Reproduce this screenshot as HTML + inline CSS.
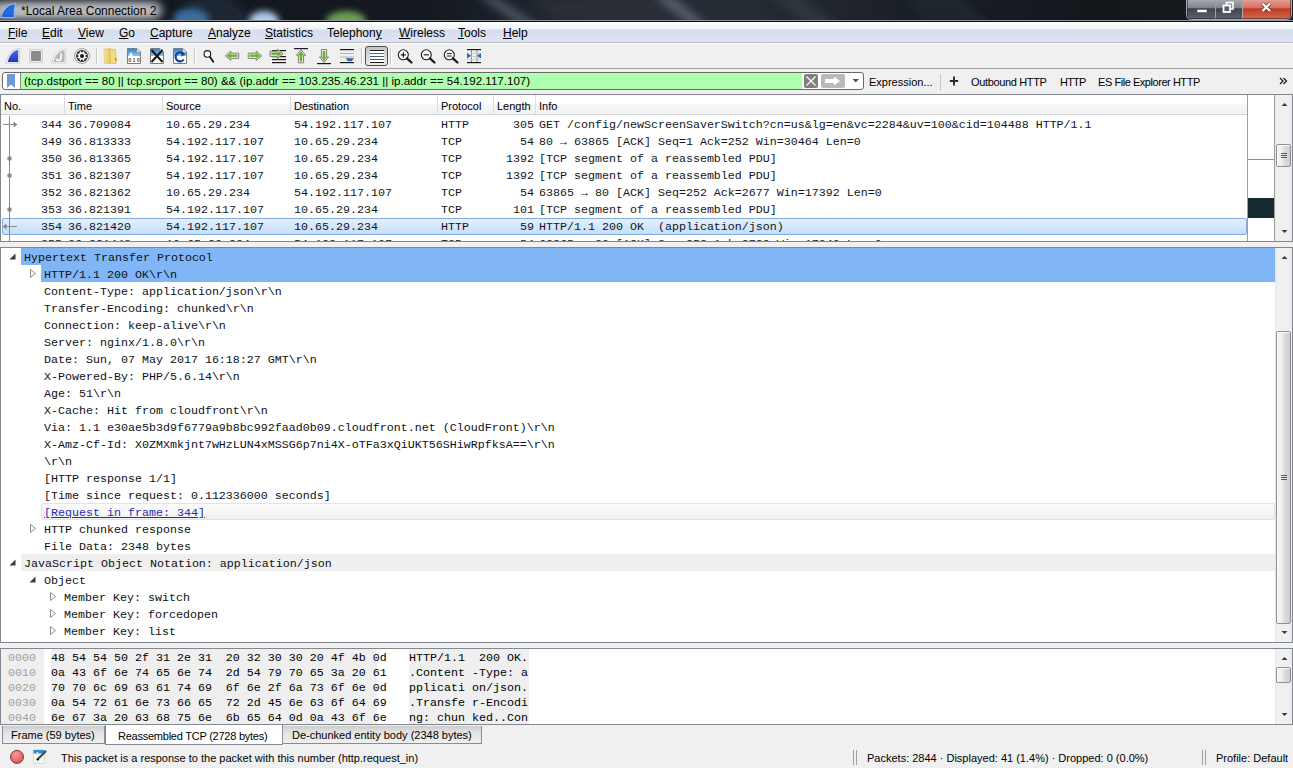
<!DOCTYPE html><html><head><meta charset="utf-8"><style>
*{margin:0;padding:0;box-sizing:border-box}
html,body{width:1293px;height:768px;overflow:hidden;background:#f0f0f0;font-family:"Liberation Sans",sans-serif;font-size:11px;color:#000}
.a{position:absolute;white-space:pre}
#menu span{position:absolute;top:4px;font-size:12px;line-height:14px}
#menu u{text-decoration:underline;text-underline-offset:1px}
.pane{position:absolute;background:#fff;border:1px solid #828790}
.pr{position:absolute;height:17px;line-height:17px;margin:1px 0 0 -1px;font-family:"Liberation Mono",monospace;font-size:11.6667px;letter-spacing:0px;white-space:pre;color:#12161b}
.dr{position:absolute;height:17px;line-height:17px;margin-top:2px;font-family:"Liberation Mono",monospace;font-size:11.6667px;letter-spacing:0px;white-space:pre;color:#0d1117}
.hx{position:absolute;height:15px;line-height:15px;margin-top:2px;font-family:"Liberation Mono",monospace;font-size:11.6667px;letter-spacing:0px;white-space:pre}
</style></head><body>
<svg class="a" style="left:0;top:0" width="1293" height="22" viewBox="0 0 1293 22"><defs><filter id="b4" x="-50%" y="-50%" width="200%" height="200%"><feGaussianBlur stdDeviation="4"/></filter><filter id="b8" x="-50%" y="-50%" width="200%" height="200%"><feGaussianBlur stdDeviation="8"/></filter><filter id="b3" x="-50%" y="-50%" width="200%" height="200%"><feGaussianBlur stdDeviation="3"/></filter><linearGradient id="tbg" x1="0" y1="0" x2="1" y2="0"><stop offset="0" stop-color="#12171d"/><stop offset="0.33" stop-color="#141920"/><stop offset="0.45" stop-color="#232a33"/><stop offset="0.58" stop-color="#262c34"/><stop offset="0.7" stop-color="#1b2027"/><stop offset="0.85" stop-color="#13171c"/><stop offset="1" stop-color="#1a1e23"/></linearGradient><linearGradient id="btng" x1="0" y1="0" x2="0" y2="1"><stop offset="0" stop-color="#a9aeb4"/><stop offset="0.45" stop-color="#7d838b"/><stop offset="0.5" stop-color="#3f454e"/><stop offset="1" stop-color="#5b6169"/></linearGradient><linearGradient id="btnr" x1="0" y1="0" x2="0" y2="1"><stop offset="0" stop-color="#e6a49b"/><stop offset="0.45" stop-color="#d66f60"/><stop offset="0.5" stop-color="#c23a22"/><stop offset="1" stop-color="#d0654f"/></linearGradient></defs><rect x="0" y="0" width="1293" height="20" fill="url(#tbg)"/><g filter="url(#b4)"><path d="M478 -4 L494 -4 L540 26 L522 26 Z" fill="#4a5563"/><path d="M655 -4 L672 -4 L708 26 L690 26 Z" fill="#56616e"/><path d="M530 0 L660 0 L690 22 L560 22 Z" fill="#2a313a" opacity="0.8"/><path d="M180 -4 L230 -4 L260 26 L210 26 Z" fill="#1e2630"/><path d="M770 -4 L800 -4 L840 26 L810 26 Z" fill="#2e353e"/><path d="M900 -4 L960 -4 L990 26 L930 26 Z" fill="#1f252c"/></g><g filter="url(#b3)"><ellipse cx="191" cy="20" rx="18" ry="12" fill="#3a6c9c"/><ellipse cx="264" cy="21" rx="15" ry="10" fill="#aecbea"/><ellipse cx="346" cy="21" rx="20" ry="10" fill="#6c9e52"/></g><g filter="url(#b4)"><rect x="-10" y="2" width="172" height="17" rx="8" fill="#b2b6bc"/></g><rect x="4" y="5" width="146" height="11" fill="#c6c9ce" opacity="0.5" filter="url(#b4)"/><path d="M0.3 18 L15 18 C14.2 13 14.6 8 16 3 C8.5 3.5 2.5 9 0.3 18 Z" fill="#8fbaf0"/><path d="M1.6 17 L13.9 17 C13.3 12.5 13.6 8.5 14.7 4.3 C8.5 5 3.5 10 1.6 17 Z" fill="#1f5fd9"/><path d="M4 15 L12.5 15 C12.2 11.5 12.4 9 13 6 C8.5 7 5.5 10.5 4 15 Z" fill="#2a70e6" opacity="0.7"/><path d="M1186.5 -1 V14.5 Q1186.5 19.5 1191.5 19.5 H1286.5 Q1291.5 19.5 1291.5 14.5 V-1" fill="none" stroke="#c9ccd0" stroke-width="1" opacity="0.8"/><path d="M1187.5 -1 V14 Q1187.5 18.5 1192 18.5 H1215 V-1 Z" fill="url(#btng)"/><rect x="1216" y="-1" width="26" height="19.5" fill="url(#btng)"/><path d="M1243 -1 V18.5 H1286 Q1290.5 18.5 1290.5 14 V-1 Z" fill="url(#btnr)"/><rect x="1215" y="0" width="1" height="18.5" fill="#d7d9dc" opacity="0.7"/><rect x="1242" y="0" width="1" height="18.5" fill="#e0c8c4" opacity="0.8"/><rect x="1197" y="9.5" width="10" height="3" fill="#fff" stroke="#555" stroke-width="0.6"/><rect x="1226.5" y="2.5" width="6.5" height="6.5" fill="none" stroke="#fff" stroke-width="1.6"/><rect x="1223.5" y="5.5" width="6.5" height="6.5" fill="#5a6068" stroke="#fff" stroke-width="1.8"/><path d="M1262.5 3.5 L1270 11 M1270 3.5 L1262.5 11" stroke="#5a2a22" stroke-width="3.6"/><path d="M1262.5 3.5 L1270 11 M1270 3.5 L1262.5 11" stroke="#fff" stroke-width="2.4"/></svg>
<div class="a" style="left:0;top:20px;width:1293px;height:1px;background:#8f959c"></div>
<div class="a" style="left:0;top:21px;width:1293px;height:1px;background:#0a0c0e"></div>
<div class="a" style="left:21px;top:4px;font-size:12px;line-height:14px">*Local Area Connection 2</div>
<div id="menu" class="a" style="left:0;top:22px;width:1293px;height:20px;background:linear-gradient(#ffffff 0,#f0f2f8 7px,#d7ddec 8px,#dfe4f3 100%)">
<span style="left:8px"><u>F</u>ile</span>
<span style="left:42px"><u>E</u>dit</span>
<span style="left:78px"><u>V</u>iew</span>
<span style="left:119px"><u>G</u>o</span>
<span style="left:150px"><u>C</u>apture</span>
<span style="left:208px"><u>A</u>nalyze</span>
<span style="left:265px"><u>S</u>tatistics</span>
<span style="left:327px">Telephon<u>y</u></span>
<span style="left:399px"><u>W</u>ireless</span>
<span style="left:458px"><u>T</u>ools</span>
<span style="left:503px"><u>H</u>elp</span>
</div>
<div class="a" style="left:0;top:42px;width:1293px;height:1px;background:#b8bcc6"></div>
<div class="a" style="left:0;top:43px;width:1293px;height:1px;background:#ffffff"></div>
<svg class="a" style="left:0;top:44px" width="500" height="24" viewBox="0 44 500 24"><defs><linearGradient id="gfin" x1="0" y1="0" x2="0" y2="1"><stop offset="0" stop-color="#4a6ee8"/><stop offset="1" stop-color="#1f34b8"/></linearGradient><linearGradient id="gdoc" x1="0" y1="0" x2="0" y2="1"><stop offset="0" stop-color="#2f86d6"/><stop offset="1" stop-color="#8cc4ee"/></linearGradient><linearGradient id="gfold" x1="0" y1="0" x2="1" y2="0"><stop offset="0" stop-color="#f7e79a"/><stop offset="1" stop-color="#e2c45a"/></linearGradient><linearGradient id="gbtn" x1="0" y1="0" x2="0" y2="1"><stop offset="0" stop-color="#c4c4c4"/><stop offset="1" stop-color="#ececec"/></linearGradient></defs><path d="M5.5 63.5 L19.8 63.5 L19.8 48 C13 48.5 7.5 53 5.5 63.5 Z" fill="#c4c8d0"/><path d="M6.6 62.6 L18.9 62.6 L18.9 49 C13 49.5 8.5 54 6.6 62.6 Z" fill="#fff"/><path d="M7.8 62 L18.2 62 L18.2 50 C13.5 50.5 9.5 54.5 7.8 62 Z" fill="url(#gfin)"/><rect x="29.5" y="49.5" width="13" height="13" fill="#f4f4f4" stroke="#cfcfcf"/><rect x="31" y="51" width="10" height="10" fill="#8a8a8a"/><path d="M51 63.5 L66.3 63.5 L66.3 48 C59 48.5 53 53 51 63.5 Z" fill="#d4d4d4"/><path d="M52.2 62.6 L65.4 62.6 L65.4 49 C59 49.5 54 54 52.2 62.6 Z" fill="#fff"/><path d="M53.4 62 L64.7 62 L64.7 50 C59.5 50.5 55 54.5 53.4 62 Z" fill="#b8b8b8"/><path d="M61 53.5 L61 58 Q61 60.5 58.5 60.5 Q56.5 60.5 56.3 58.5" fill="none" stroke="#fff" stroke-width="1.6"/><circle cx="82" cy="56" r="7.4" fill="#fff" stroke="#8c8c8c" stroke-width="0.9"/><circle cx="82" cy="56" r="5.9" fill="#1e1e1e"/><circle cx="82" cy="56" r="3.4" fill="#fff"/><circle cx="85.60" cy="57.49" r="1.05" fill="#fff"/><circle cx="83.49" cy="59.60" r="1.05" fill="#fff"/><circle cx="80.51" cy="59.60" r="1.05" fill="#fff"/><circle cx="78.40" cy="57.49" r="1.05" fill="#fff"/><circle cx="78.40" cy="54.51" r="1.05" fill="#fff"/><circle cx="80.51" cy="52.40" r="1.05" fill="#fff"/><circle cx="83.49" cy="52.40" r="1.05" fill="#fff"/><circle cx="85.60" cy="54.51" r="1.05" fill="#fff"/><rect x="80.2" y="54.2" width="3.6" height="3.6" rx="0.8" fill="#111"/><rect x="96" y="48" width="1" height="16" fill="#c8c8c8"/><rect x="97" y="48" width="1" height="16" fill="#fff"/><path d="M104 49 L110 48.5 L110.5 63.5 L104.5 63.5 Z" fill="url(#gfold)" stroke="#d9bf5a" stroke-width="0.6"/><path d="M110 49 L115.5 49.5 L116 59 L117 60 L116 63.5 L110.5 63.5 Z" fill="#f2dc7c" stroke="#d3b44a" stroke-width="0.6"/><rect x="115" y="58" width="1.2" height="2.5" fill="#8f7a3a"/><path d="M127.5 48.5 L137 48.5 L140.5 52 L140.5 63.5 L127.5 63.5 Z" fill="#fff" stroke="#7d7d7d" stroke-width="1"/><path d="M128 49 L136.8 49 L140 52.2 L140 56 L128 56 Z" fill="url(#gdoc)"/><path d="M137 49 L137 52 L140 52" fill="#e8f2fb" stroke="#9ab" stroke-width="0.5"/><path d="M150.5 48.5 L160 48.5 L163.5 52 L163.5 63.5 L150.5 63.5 Z" fill="#fff" stroke="#7d7d7d" stroke-width="1"/><path d="M151 49 L159.8 49 L163 52.2 L163 56 L151 56 Z" fill="url(#gdoc)"/><path d="M160 49 L160 52 L163 52" fill="#e8f2fb" stroke="#9ab" stroke-width="0.5"/><path d="M173.5 48.5 L183 48.5 L186.5 52 L186.5 63.5 L173.5 63.5 Z" fill="#fff" stroke="#7d7d7d" stroke-width="1"/><path d="M174 49 L182.8 49 L186 52.2 L186 56 L174 56 Z" fill="url(#gdoc)"/><path d="M183 49 L183 52 L186 52" fill="#e8f2fb" stroke="#9ab" stroke-width="0.5"/><path d="M129 56 L131 52 L133 56 Z" fill="#fff"/><text x="128.2" y="62" font-family="Liberation Sans" font-size="5.5" font-weight="bold" fill="#555" textLength="11.5">010</text><path d="M151.5 50 L162.5 62 M162.5 50 L151.5 62" stroke="#151515" stroke-width="2"/><path d="M183.5 54 A4.5 4.5 0 1 0 183.8 59.5" fill="none" stroke="#1b3f9e" stroke-width="2.2"/><path d="M181 51.5 L185.5 54.5 L181.5 56.5 Z" fill="#1b3f9e"/><rect x="194" y="48" width="1" height="16" fill="#c8c8c8"/><rect x="195" y="48" width="1" height="16" fill="#fff"/><circle cx="207.4" cy="53.9" r="3.3" fill="#fff" stroke="#1a1a1a" stroke-width="1.1"/><path d="M209.9 56.7 L213.3 61.8" stroke="#1a1a1a" stroke-width="1.9" stroke-linecap="round"/><path d="M225.25 55.80 L230.75 51.20 L230.75 53.20 L238.75 53.20 L238.75 58.40 L230.75 58.40 L230.75 60.40 Z" fill="#fbfdf8" stroke="#7b7f7a" stroke-width="1" stroke-linejoin="round"/><path d="M226.85 55.80 L230.45 53.20 L230.45 54.80 L237.15 54.80 L237.15 56.80 L230.45 56.80 L230.45 58.40 Z" fill="#6cb02e" stroke="#6cb02e" stroke-width="0.6" stroke-linejoin="round"/><path d="M261.75 55.80 L256.25 51.20 L256.25 53.20 L248.25 53.20 L248.25 58.40 L256.25 58.40 L256.25 60.40 Z" fill="#fbfdf8" stroke="#7b7f7a" stroke-width="1" stroke-linejoin="round"/><path d="M260.15 55.80 L256.55 53.20 L256.55 54.80 L249.85 54.80 L249.85 56.80 L256.55 56.80 L256.55 58.40 Z" fill="#6cb02e" stroke="#6cb02e" stroke-width="0.6" stroke-linejoin="round"/><rect x="272" y="50" width="14" height="1.2" fill="#1a1a1a"/><rect x="282" y="53" width="4" height="1.6" fill="#f1e67a"/><rect x="272" y="56" width="14" height="1.2" fill="#1a1a1a"/><rect x="272" y="59" width="14" height="1.2" fill="#1a1a1a"/><rect x="272" y="62" width="14" height="1.2" fill="#1a1a1a"/><path d="M283.00 53.80 L277.50 49.20 L277.50 51.20 L270.00 51.20 L270.00 56.40 L277.50 56.40 L277.50 58.40 Z" fill="#fbfdf8" stroke="#7b7f7a" stroke-width="1" stroke-linejoin="round"/><path d="M281.40 53.80 L277.80 51.20 L277.80 52.80 L271.60 52.80 L271.60 54.80 L277.80 54.80 L277.80 56.40 Z" fill="#6cb02e" stroke="#6cb02e" stroke-width="0.6" stroke-linejoin="round"/><rect x="294" y="48" width="14" height="1.2" fill="#1a1a1a"/><path d="M301.00 49.80 L296.40 55.30 L298.40 55.30 L298.40 62.80 L303.60 62.80 L303.60 55.30 L305.60 55.30 Z" fill="#fbfdf8" stroke="#7b7f7a" stroke-width="1" stroke-linejoin="round"/><path d="M301.00 51.40 L298.40 55.00 L300.00 55.00 L300.00 61.20 L302.00 61.20 L302.00 55.00 L303.60 55.00 Z" fill="#6cb02e" stroke="#6cb02e" stroke-width="0.6" stroke-linejoin="round"/><rect x="317" y="63" width="14" height="1.2" fill="#1a1a1a"/><path d="M324.00 62.50 L319.40 57.00 L321.40 57.00 L321.40 49.50 L326.60 49.50 L326.60 57.00 L328.60 57.00 Z" fill="#fbfdf8" stroke="#7b7f7a" stroke-width="1" stroke-linejoin="round"/><path d="M324.00 60.90 L321.40 57.30 L323.00 57.30 L323.00 51.10 L325.00 51.10 L325.00 57.30 L326.60 57.30 Z" fill="#6cb02e" stroke="#6cb02e" stroke-width="0.6" stroke-linejoin="round"/><rect x="340" y="49" width="14" height="1.2" fill="#1a1a1a"/><rect x="340" y="53" width="14" height="1" fill="#b0b0b0"/><rect x="340" y="56.5" width="14" height="1" fill="#b0b0b0"/><rect x="340" y="62" width="14" height="1.2" fill="#1a1a1a"/><path d="M345.5 58.3 L354 58.3 L351.5 61.3 L348 61.3 Z" fill="#2f62b0"/><rect x="361" y="48" width="1" height="16" fill="#c8c8c8"/><rect x="362" y="48" width="1" height="16" fill="#fff"/><rect x="365.5" y="46.5" width="22" height="19" rx="2.5" fill="url(#gbtn)" stroke="#4e4e4e"/><rect x="370" y="51" width="14" height="11" fill="#fff"/><rect x="370" y="50" width="14" height="1" fill="#1a1a1a"/><rect x="370" y="53" width="14" height="1" fill="#a84444"/><rect x="370" y="56" width="14" height="1" fill="#3f5a84"/><rect x="370" y="59" width="14" height="1" fill="#5e4466"/><rect x="370" y="62" width="14" height="1" fill="#1a1a1a"/><rect x="390" y="48" width="1" height="16" fill="#c8c8c8"/><rect x="391" y="48" width="1" height="16" fill="#fff"/><circle cx="403.3" cy="54.8" r="5" fill="#fff" stroke="#1a1a1a" stroke-width="1.1"/><path d="M406.90000000000003 58.4 L411.5 62.5" stroke="#1a1a1a" stroke-width="2.3" stroke-linecap="round"/><path d="M400.7 54.8 H405.90000000000003 M403.3 52.199999999999996 V57.4" stroke="#1a1a1a" stroke-width="1.2"/><circle cx="426.3" cy="54.8" r="5" fill="#fff" stroke="#1a1a1a" stroke-width="1.1"/><path d="M429.90000000000003 58.4 L434.5 62.5" stroke="#1a1a1a" stroke-width="2.3" stroke-linecap="round"/><path d="M423.7 54.8 H428.90000000000003" stroke="#1a1a1a" stroke-width="1.2"/><circle cx="449.3" cy="54.8" r="5" fill="#fff" stroke="#1a1a1a" stroke-width="1.1"/><path d="M452.90000000000003 58.4 L457.5 62.5" stroke="#1a1a1a" stroke-width="2.3" stroke-linecap="round"/><path d="M446.8 53.599999999999994 H451.8 M446.8 56.0 H451.8" stroke="#1a1a1a" stroke-width="1"/><rect x="467" y="49" width="14" height="1.2" fill="#1a1a1a"/><rect x="467" y="62" width="14" height="1.2" fill="#1a1a1a"/><rect x="471" y="50" width="1" height="12" fill="#8a8a8a"/><rect x="476.5" y="50" width="1" height="12" fill="#8a8a8a"/><rect x="467" y="53" width="14" height="0.8" fill="#c8c8c8"/><rect x="467" y="56" width="14" height="0.8" fill="#c8c8c8"/><rect x="467" y="59" width="14" height="0.8" fill="#c8c8c8"/><path d="M467 53 L471 55.7 L467 58.5 Z" fill="#2f6ab8"/><path d="M481 53 L477 55.7 L481 58.5 Z" fill="#2f6ab8"/></svg>
<div class="a" style="left:0;top:68px;width:1293px;height:1px;background:#a0a0a0"></div>
<div class="a" style="left:2px;top:72px;width:862px;height:18px;border:1px solid #6a6a6a;border-radius:3px;background:#fff;overflow:hidden"><div class="a" style="left:17px;top:0;width:782px;height:16px;background:#afffaf;border-left:1px solid #8a8a8a"></div></div>
<svg class="a" style="left:0;top:69px" width="870" height="24" viewBox="0 69 870 24"><path d="M7 74 H15 V88 L11 84.5 L7 88 Z" fill="#6c9bd5"/><rect x="804" y="74" width="14" height="14" rx="2" fill="#808080"/><path d="M806.5 76.5 L815.5 85.5 M815.5 76.5 L806.5 85.5" stroke="#fff" stroke-width="1.1"/><rect x="821" y="74" width="24" height="14" rx="2" fill="#b9b9b9"/><path d="M825 79 H834 V76.5 L840 81 L834 85.5 V83 H825 Z" fill="#fff"/><path d="M852.5 79 H859 L855.75 82.5 Z" fill="#555"/></svg>
<div class="a" style="left:24px;top:74px;font-size:11.57px;line-height:15px">(tcp.dstport == 80 || tcp.srcport == 80) &amp;&amp; (ip.addr == 103.235.46.231 || ip.addr == 54.192.117.107)</div>
<div class="a" style="left:869px;top:75px;line-height:14px">Expression...</div>
<div class="a" style="left:940px;top:74px;width:1px;height:17px;background:#c8c8c8"></div>
<svg class="a" style="left:948px;top:75px" width="12" height="12" viewBox="0 0 12 12"><path d="M6 1.5 V10.5 M1.8 6 H10.2" stroke="#2a2a2a" stroke-width="1.9"/></svg>
<div class="a" style="left:971px;top:75px;line-height:14px;letter-spacing:-0.35px">Outbound HTTP</div>
<div class="a" style="left:1060px;top:75px;line-height:14px;letter-spacing:-0.8px">HTTP</div>
<div class="a" style="left:1098px;top:75px;line-height:14px;letter-spacing:-0.45px">ES File Explorer HTTP</div>
<svg class="a" style="left:1279px;top:77px" width="9" height="8" viewBox="0 0 9 8"><path d="M1 1 L4 4 L1 7 M4.5 1 L7.5 4 L4.5 7" fill="none" stroke="#222" stroke-width="1.3"/></svg>
<div class="pane" style="left:0;top:94px;width:1293px;height:148px"></div>
<div class="a" style="left:1px;top:95px;width:1246px;height:20px;background:linear-gradient(#ffffff 0,#ffffff 9px,#f3f4f6 10px,#f1f2f4 100%)"></div>
<div class="a" style="left:1px;top:114px;width:1246px;height:1px;background:#d5d5d5"></div>
<div class="a" style="left:4px;top:100px;line-height:13px">No.</div>
<div class="a" style="left:68px;top:100px;line-height:13px">Time</div>
<div class="a" style="left:166px;top:100px;line-height:13px">Source</div>
<div class="a" style="left:294px;top:100px;line-height:13px">Destination</div>
<div class="a" style="left:441px;top:100px;line-height:13px">Protocol</div>
<div class="a" style="left:497px;top:100px;line-height:13px">Length</div>
<div class="a" style="left:539px;top:100px;line-height:13px">Info</div>
<div class="a" style="left:64px;top:95px;width:1px;height:19px;background:#dcdde0"></div>
<div class="a" style="left:162px;top:95px;width:1px;height:19px;background:#dcdde0"></div>
<div class="a" style="left:290px;top:95px;width:1px;height:19px;background:#dcdde0"></div>
<div class="a" style="left:437px;top:95px;width:1px;height:19px;background:#dcdde0"></div>
<div class="a" style="left:493px;top:95px;width:1px;height:19px;background:#dcdde0"></div>
<div class="a" style="left:535px;top:95px;width:1px;height:19px;background:#dcdde0"></div>
<div class="a" style="left:1247px;top:95px;width:1px;height:146px;background:#a0a0a0"></div>
<div class="a" style="left:1274px;top:95px;width:1px;height:146px;background:#a0a0a0"></div>
<div class="a" style="left:1248px;top:159px;width:26px;height:1px;background:#5b9ad6"></div>
<div class="a" style="left:1248px;top:198px;width:26px;height:20px;background:#172a30"></div>
<div class="a" style="left:1275px;top:95px;width:17px;height:146px;background:linear-gradient(90deg,#e6e6e6 0,#f0f0f0 2px,#f0f0f0 14px,#e9e9e9 17px)"></div><svg class="a" style="left:1275px;top:95px" width="17" height="146" viewBox="0 0 17 146"><path d="M6.5 11 L9.5 8 L12.5 11 Z" fill="#3a3a3a"/><path d="M6.5 135 L9.5 138 L12.5 135 Z" fill="#3a3a3a"/></svg><div class="a" style="left:1276px;top:144px;width:15px;height:23px;border:1px solid #8e8f8f;border-radius:2px;background:linear-gradient(90deg,#f7f7f7 0,#ececec 45%,#dcdcdc 55%,#cfcfcf 100%);box-shadow:inset 1px 1px 0 #fff"></div><div class="a" style="left:1281px;top:153px;width:6px;height:1px;background:#5a5a5a;box-shadow:0 2px 0 #5a5a5a,0 4px 0 #5a5a5a"></div>
<div class="a" style="left:1px;top:115px;width:1246px;height:126px;overflow:hidden">
<div class="a" style="left:1px;top:103px;width:1245px;height:17px;border:1px solid #84acdd;border-radius:2px;background:linear-gradient(#e4f0fd,#c4defc)"></div>
<div class="pr" style="left:41px;top:1px">344</div>
<div class="pr" style="left:68px;top:1px">36.709084</div>
<div class="pr" style="left:166px;top:1px">10.65.29.234</div>
<div class="pr" style="left:294px;top:1px">54.192.117.107</div>
<div class="pr" style="left:441px;top:1px">HTTP</div>
<div class="pr" style="left:513px;top:1px">305</div>
<div class="pr" style="left:539px;top:1px">GET /config/newScreenSaverSwitch?cn=us&amp;lg=en&amp;vc=2284&amp;uv=100&amp;cid=104488 HTTP/1.1</div>
<div class="pr" style="left:41px;top:18px">349</div>
<div class="pr" style="left:68px;top:18px">36.813333</div>
<div class="pr" style="left:166px;top:18px">54.192.117.107</div>
<div class="pr" style="left:294px;top:18px">10.65.29.234</div>
<div class="pr" style="left:441px;top:18px">TCP</div>
<div class="pr" style="left:520px;top:18px">54</div>
<div class="pr" style="left:539px;top:18px">80 → 63865 [ACK] Seq=1 Ack=252 Win=30464 Len=0</div>
<div class="pr" style="left:41px;top:35px">350</div>
<div class="pr" style="left:68px;top:35px">36.813365</div>
<div class="pr" style="left:166px;top:35px">54.192.117.107</div>
<div class="pr" style="left:294px;top:35px">10.65.29.234</div>
<div class="pr" style="left:441px;top:35px">TCP</div>
<div class="pr" style="left:506px;top:35px">1392</div>
<div class="pr" style="left:539px;top:35px">[TCP segment of a reassembled PDU]</div>
<div class="pr" style="left:41px;top:52px">351</div>
<div class="pr" style="left:68px;top:52px">36.821307</div>
<div class="pr" style="left:166px;top:52px">54.192.117.107</div>
<div class="pr" style="left:294px;top:52px">10.65.29.234</div>
<div class="pr" style="left:441px;top:52px">TCP</div>
<div class="pr" style="left:506px;top:52px">1392</div>
<div class="pr" style="left:539px;top:52px">[TCP segment of a reassembled PDU]</div>
<div class="pr" style="left:41px;top:69px">352</div>
<div class="pr" style="left:68px;top:69px">36.821362</div>
<div class="pr" style="left:166px;top:69px">10.65.29.234</div>
<div class="pr" style="left:294px;top:69px">54.192.117.107</div>
<div class="pr" style="left:441px;top:69px">TCP</div>
<div class="pr" style="left:520px;top:69px">54</div>
<div class="pr" style="left:539px;top:69px">63865 → 80 [ACK] Seq=252 Ack=2677 Win=17392 Len=0</div>
<div class="pr" style="left:41px;top:86px">353</div>
<div class="pr" style="left:68px;top:86px">36.821391</div>
<div class="pr" style="left:166px;top:86px">54.192.117.107</div>
<div class="pr" style="left:294px;top:86px">10.65.29.234</div>
<div class="pr" style="left:441px;top:86px">TCP</div>
<div class="pr" style="left:513px;top:86px">101</div>
<div class="pr" style="left:539px;top:86px">[TCP segment of a reassembled PDU]</div>
<div class="pr" style="left:41px;top:103px">354</div>
<div class="pr" style="left:68px;top:103px">36.821420</div>
<div class="pr" style="left:166px;top:103px">54.192.117.107</div>
<div class="pr" style="left:294px;top:103px">10.65.29.234</div>
<div class="pr" style="left:441px;top:103px">HTTP</div>
<div class="pr" style="left:520px;top:103px">59</div>
<div class="pr" style="left:539px;top:103px">HTTP/1.1 200 OK  (application/json)</div>
<div class="pr" style="left:41px;top:120px">355</div>
<div class="pr" style="left:68px;top:120px">36.821443</div>
<div class="pr" style="left:166px;top:120px">10.65.29.234</div>
<div class="pr" style="left:294px;top:120px">54.192.117.107</div>
<div class="pr" style="left:441px;top:120px">TCP</div>
<div class="pr" style="left:520px;top:120px">54</div>
<div class="pr" style="left:539px;top:120px">63865 → 80 [ACK] Seq=252 Ack=2729 Win=17340 Len=0</div>
<svg class="a" style="left:0;top:0" width="24" height="126" viewBox="1 115 24 126"><path d="M9.5 116 V241" stroke="#8a8a8a" stroke-width="1"/><path d="M3 124.5 H15" stroke="#8a8a8a" stroke-width="1"/><path d="M13.5 121.5 L17.5 124.5 L13.5 127.5 Z" fill="#8a8a8a"/><circle cx="9.5" cy="158.5" r="2.3" fill="#8a8a8a"/><circle cx="9.5" cy="175.5" r="2.3" fill="#8a8a8a"/><circle cx="9.5" cy="209.5" r="2.3" fill="#8a8a8a"/><path d="M6 226.5 H17" stroke="#8a8a8a" stroke-width="1"/><path d="M6.5 223.5 L2.5 226.5 L6.5 229.5 Z" fill="#8a8a8a"/></svg>
</div>
<div class="pane" style="left:0;top:247px;width:1293px;height:396px"></div>
<div class="a" style="left:1275px;top:248px;width:17px;height:394px;background:linear-gradient(90deg,#e6e6e6 0,#f0f0f0 2px,#f0f0f0 14px,#e9e9e9 17px)"></div><svg class="a" style="left:1275px;top:248px" width="17" height="394" viewBox="0 0 17 394"><path d="M6.5 11 L9.5 8 L12.5 11 Z" fill="#3a3a3a"/><path d="M6.5 383 L9.5 386 L12.5 383 Z" fill="#3a3a3a"/></svg><div class="a" style="left:1276px;top:331px;width:15px;height:293px;border:1px solid #8e8f8f;border-radius:2px;background:linear-gradient(90deg,#f7f7f7 0,#ececec 45%,#dcdcdc 55%,#cfcfcf 100%);box-shadow:inset 1px 1px 0 #fff"></div><div class="a" style="left:1281px;top:475px;width:6px;height:1px;background:#5a5a5a;box-shadow:0 2px 0 #5a5a5a,0 4px 0 #5a5a5a"></div>
<div class="a" style="left:21px;top:248px;width:1254px;height:17px;background:#80b6f5"></div>
<svg class="a" style="left:8.5px;top:252.5px" width="8" height="8" viewBox="0 0 8 8"><path d="M0.5 6.5 L6.5 0.5 L6.5 6.5 Z" fill="#3c3c3c"/></svg>
<div class="dr" style="left:24px;top:248px;">Hypertext Transfer Protocol</div>
<div class="a" style="left:41px;top:265px;width:1234px;height:17px;background:#80b6f5"></div>
<svg class="a" style="left:30px;top:269px" width="8" height="10" viewBox="0 0 8 10"><path d="M0.5 0.5 L5.5 4.5 L0.5 8.5 Z" fill="#fff" stroke="#8c8c8c" stroke-width="1"/></svg>
<div class="dr" style="left:44px;top:265px;">HTTP/1.1 200 OK\r\n</div>
<div class="dr" style="left:44px;top:282px;">Content-Type: application/json\r\n</div>
<div class="dr" style="left:44px;top:299px;">Transfer-Encoding: chunked\r\n</div>
<div class="dr" style="left:44px;top:316px;">Connection: keep-alive\r\n</div>
<div class="dr" style="left:44px;top:333px;">Server: nginx/1.8.0\r\n</div>
<div class="dr" style="left:44px;top:350px;">Date: Sun, 07 May 2017 16:18:27 GMT\r\n</div>
<div class="dr" style="left:44px;top:367px;">X-Powered-By: PHP/5.6.14\r\n</div>
<div class="dr" style="left:44px;top:384px;">Age: 51\r\n</div>
<div class="dr" style="left:44px;top:401px;">X-Cache: Hit from cloudfront\r\n</div>
<div class="dr" style="left:44px;top:418px;">Via: 1.1 e30ae5b3d9f6779a9b8bc992faad0b09.cloudfront.net (CloudFront)\r\n</div>
<div class="dr" style="left:44px;top:435px;">X-Amz-Cf-Id: X0ZMXmkjnt7wHzLUN4xMSSG6p7ni4X-oTFa3xQiUKT56SHiwRpfksA==\r\n</div>
<div class="dr" style="left:44px;top:452px;">\r\n</div>
<div class="dr" style="left:44px;top:469px;">[HTTP response 1/1]</div>
<div class="dr" style="left:44px;top:486px;">[Time since request: 0.112336000 seconds]</div>
<div class="a" style="left:41px;top:503px;width:1234px;height:17px;border:1px solid #e3e3e3;border-radius:2px;background:linear-gradient(#fbfbfb,#f1f1f1)"></div>
<div class="dr" style="left:44px;top:503px;color:#1f2fb5;text-decoration:underline;text-underline-offset:1px">[Request in frame: 344]</div>
<svg class="a" style="left:30px;top:524px" width="8" height="10" viewBox="0 0 8 10"><path d="M0.5 0.5 L5.5 4.5 L0.5 8.5 Z" fill="#fff" stroke="#8c8c8c" stroke-width="1"/></svg>
<div class="dr" style="left:44px;top:520px;">HTTP chunked response</div>
<div class="dr" style="left:44px;top:537px;">File Data: 2348 bytes</div>
<div class="a" style="left:21px;top:554px;width:1254px;height:17px;background:#efefef"></div>
<svg class="a" style="left:8.5px;top:558.5px" width="8" height="8" viewBox="0 0 8 8"><path d="M0.5 6.5 L6.5 0.5 L6.5 6.5 Z" fill="#3c3c3c"/></svg>
<div class="dr" style="left:24px;top:554px;">JavaScript Object Notation: application/json</div>
<svg class="a" style="left:28.5px;top:575.5px" width="8" height="8" viewBox="0 0 8 8"><path d="M0.5 6.5 L6.5 0.5 L6.5 6.5 Z" fill="#3c3c3c"/></svg>
<div class="dr" style="left:44px;top:571px;">Object</div>
<svg class="a" style="left:50px;top:592px" width="8" height="10" viewBox="0 0 8 10"><path d="M0.5 0.5 L5.5 4.5 L0.5 8.5 Z" fill="#fff" stroke="#8c8c8c" stroke-width="1"/></svg>
<div class="dr" style="left:64px;top:588px;">Member Key: switch</div>
<svg class="a" style="left:50px;top:609px" width="8" height="10" viewBox="0 0 8 10"><path d="M0.5 0.5 L5.5 4.5 L0.5 8.5 Z" fill="#fff" stroke="#8c8c8c" stroke-width="1"/></svg>
<div class="dr" style="left:64px;top:605px;">Member Key: forcedopen</div>
<svg class="a" style="left:50px;top:626px" width="8" height="10" viewBox="0 0 8 10"><path d="M0.5 0.5 L5.5 4.5 L0.5 8.5 Z" fill="#fff" stroke="#8c8c8c" stroke-width="1"/></svg>
<div class="dr" style="left:64px;top:622px;">Member Key: list</div>
<div class="pane" style="left:0;top:648px;width:1293px;height:77px"></div>
<div class="a" style="left:1275px;top:649px;width:17px;height:75px;background:linear-gradient(90deg,#e6e6e6 0,#f0f0f0 2px,#f0f0f0 14px,#e9e9e9 17px)"></div><svg class="a" style="left:1275px;top:649px" width="17" height="75" viewBox="0 0 17 75"><path d="M6.5 11 L9.5 8 L12.5 11 Z" fill="#3a3a3a"/><path d="M6.5 64 L9.5 67 L12.5 64 Z" fill="#3a3a3a"/></svg><div class="a" style="left:1276px;top:667px;width:15px;height:16px;border:1px solid #8e8f8f;border-radius:2px;background:linear-gradient(90deg,#f7f7f7 0,#ececec 45%,#dcdcdc 55%,#cfcfcf 100%);box-shadow:inset 1px 1px 0 #fff"></div>
<div class="a" style="left:1px;top:649px;width:43px;height:75px;background:#efefef"></div>
<div class="a" style="left:51px;top:649px;width:326px;height:75px;background:#efefef"></div>
<div class="a" style="left:409px;top:649px;width:120px;height:75px;background:#efefef"></div>
<div class="hx" style="left:8px;top:649px;color:#a0a0a0">0000</div>
<div class="hx" style="left:51px;top:649px">48 54 54 50 2f 31 2e 31  20 32 30 30 20 4f 4b 0d</div>
<div class="hx" style="left:409px;top:649px">HTTP/1.1  200 OK.</div>
<div class="hx" style="left:8px;top:664px;color:#a0a0a0">0010</div>
<div class="hx" style="left:51px;top:664px">0a 43 6f 6e 74 65 6e 74  2d 54 79 70 65 3a 20 61</div>
<div class="hx" style="left:409px;top:664px">.Content -Type: a</div>
<div class="hx" style="left:8px;top:679px;color:#a0a0a0">0020</div>
<div class="hx" style="left:51px;top:679px">70 70 6c 69 63 61 74 69  6f 6e 2f 6a 73 6f 6e 0d</div>
<div class="hx" style="left:409px;top:679px">pplicati on/json.</div>
<div class="hx" style="left:8px;top:694px;color:#a0a0a0">0030</div>
<div class="hx" style="left:51px;top:694px">0a 54 72 61 6e 73 66 65  72 2d 45 6e 63 6f 64 69</div>
<div class="hx" style="left:409px;top:694px">.Transfe r-Encodi</div>
<div class="hx" style="left:8px;top:709px;color:#a0a0a0">0040</div>
<div class="hx" style="left:51px;top:709px">6e 67 3a 20 63 68 75 6e  6b 65 64 0d 0a 43 6f 6e</div>
<div class="hx" style="left:409px;top:709px">ng: chun ked..Con</div>
<div class="a" style="left:2px;top:726px;width:103px;height:18px;border:1px solid #898c95;border-top:none;background:linear-gradient(#cdcdcd 0,#e2e2e2 6px,#efefef 100%)"></div>
<div class="a" style="left:11px;top:729px;line-height:13px">Frame (59 bytes)</div>
<div class="a" style="left:105px;top:725px;width:178px;height:20px;border:1px solid #898c95;border-top:none;background:#fff"></div>
<div class="a" style="left:118px;top:730px;line-height:13px;letter-spacing:-0.24px">Reassembled TCP (2728 bytes)</div>
<div class="a" style="left:282px;top:726px;width:200px;height:18px;border:1px solid #898c95;border-top:none;background:linear-gradient(#cdcdcd 0,#e2e2e2 6px,#efefef 100%)"></div>
<div class="a" style="left:292px;top:729px;line-height:13px">De-chunked entity body (2348 bytes)</div>
<svg class="a" style="left:0;top:746px" width="60" height="22" viewBox="0 746 60 22"><defs><radialGradient id="rc" cx="0.4" cy="0.3" r="0.8"><stop offset="0" stop-color="#f39a9a"/><stop offset="1" stop-color="#e04a55"/></radialGradient></defs><circle cx="17" cy="756.9" r="6.5" fill="url(#rc)" stroke="#7f3535" stroke-width="1"/><rect x="33.5" y="750" width="11" height="13.3" fill="#f4f6f2" stroke="#c8c8c0" stroke-width="0.6"/><rect x="33.5" y="750" width="11" height="3.5" fill="#2b8bcb"/><path d="M36 753.5 L37.5 751.5 L39 753.5 Z" fill="#e8f4fc"/><path d="M37.5 759.5 L45.5 751.5" stroke="#4a4a4a" stroke-width="2.2" stroke-linecap="round"/><path d="M37 760 L38.5 758.5" stroke="#000" stroke-width="1.6"/></svg>
<div class="a" style="left:61px;top:752px;line-height:13px">This packet is a response to the packet with this number (http.request_in)</div>
<div class="a" style="left:853px;top:750px;width:1px;height:15px;background:#a0a0a0"></div>
<div class="a" style="left:856px;top:750px;width:1px;height:15px;background:#a0a0a0"></div>
<div class="a" style="left:867px;top:752px;line-height:13px">Packets: 2844 · Displayed: 41 (1.4%) · Dropped: 0 (0.0%)</div>
<div class="a" style="left:1202px;top:750px;width:1px;height:15px;background:#a0a0a0"></div>
<div class="a" style="left:1205px;top:750px;width:1px;height:15px;background:#a0a0a0"></div>
<div class="a" style="left:1216px;top:752px;line-height:13px">Profile: Default</div>
</body></html>
